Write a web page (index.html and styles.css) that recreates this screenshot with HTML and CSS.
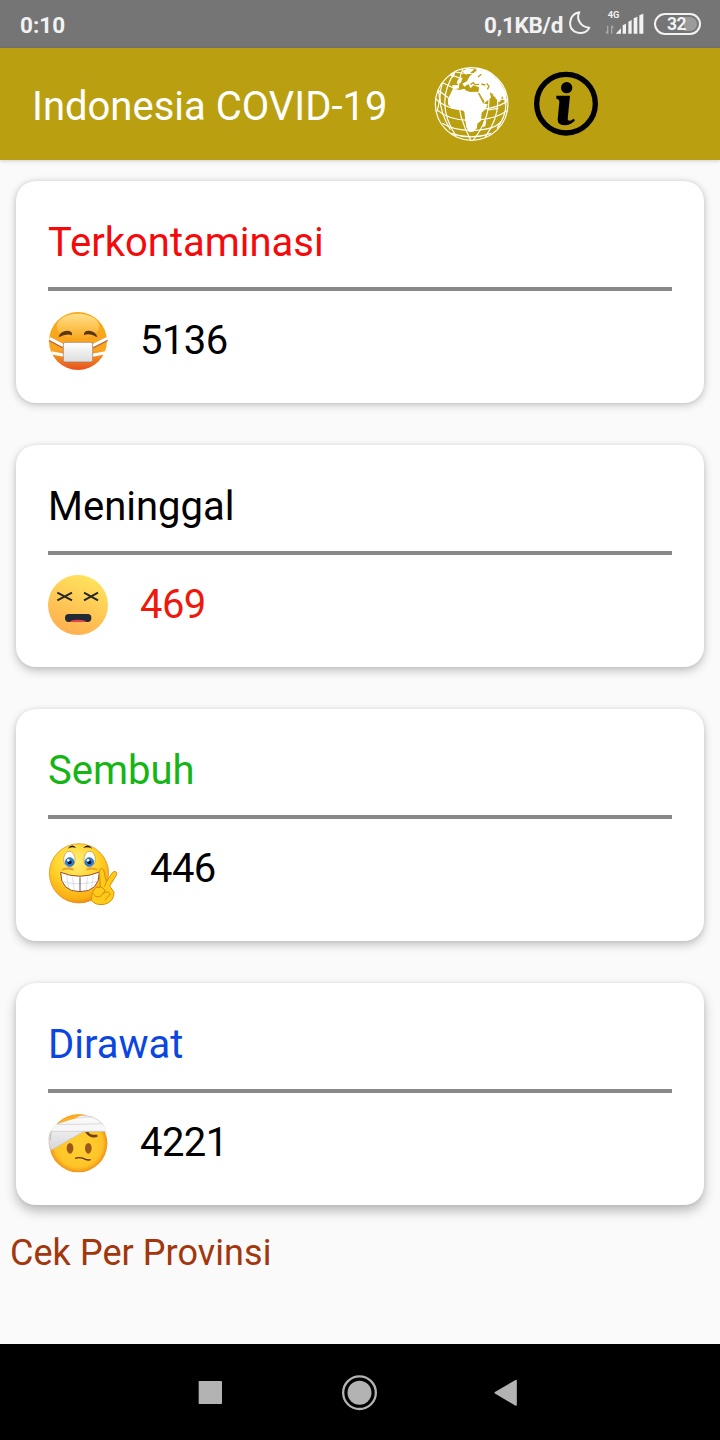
FILE: index.html
```html
<!DOCTYPE html>
<html lang="id">
<head>
<meta charset="utf-8">
<title>Indonesia COVID-19</title>
<link rel="stylesheet" href="styles.css">
</head>
<body>
<div class="screen">
  <header class="status">
    <span class="clock">0:10</span>
    <span class="speed">0,1KB/d</span>
    <svg class="moon" viewBox="0 0 72 72"><path d="M34 4C24 22 36 48 64 50C56 67 35 70 19 61C-2 47 4 9 34 4Z" fill="none" stroke="#f2f2f2" stroke-width="6" stroke-linejoin="round"/></svg>
    <svg class="signal" viewBox="405 30 120 75">
      <text x="413" y="55" class="net">4G</text>
      <path d="M413 77V101M413 101L408 95M425 101V77M425 77L430 83" stroke="#aaa" stroke-width="4" fill="none"/>
      <path d="M437 101L453 85V101ZM458 101V76L468 71V101ZM475 101V65L485 60V101ZM491 101V55L502 50V101ZM508 101V46L520 41V101Z" fill="#f2f2f2"/>
    </svg>
    <span class="battery">32</span>
  </header>
  <div class="toolbar">
    <h1>Indonesia COVID-19</h1>
    <svg class="globe" viewBox="0 -3 300 282">
      <g fill="none" stroke="#fff" stroke-width="3.500">
        <circle cx="140" cy="138" r="109"/>
        <path d="M38 97Q50 118 35 162M52 75Q30 140 76 215M91 40Q26 135 94 235M113 34Q75 130 137 246M173 35Q222 150 145 246M192 45Q250 140 180 238M215 61Q270 140 216 211"/>
        <path d="M31 121Q66 158 140 156T248 128M35 155Q75 190 144 187T246 158M52 196Q90 220 150 217T229 190M78 226Q138 247 199 226M39 96L70 119M53 74L87 91M76 50L112 63M91 42Q140 52 194 43M212 121L249 126M189 156L220 151"/>
      </g>
      <g fill="#fff">
        <path d="M83 94L100 94L116 91L124 98L136 101L157 101L163 114L174 136L188 139L182 153L170 164L168 188L157 197L156 210L145 221L132 222L124 208L121 188L118 161L109 154L80 153L69 139V122Z"/>
        <path d="M176 190L184 187L181 204L174 208Z"/>
        <path d="M158 103L178 135L198 119L195 107L205 114L213 119L218 130L225 132L231 114L238 127L240 144L245 123L241 100L226 75L201 48L177 36L153 39L134 55L126 70L112 77L118 86L130 78L137 91L145 82L162 88L161 99Z"/>
        <path d="M82 81L103 82L99 91L84 95ZM98 65L112 58L108 74L95 78ZM112 39L128 31L148 34L135 45L123 50ZM151 30L177 34L157 42ZM76 52L91 43L84 59Z"/>
      </g>
      <path d="M137 79L145 74L150 80L162 79M169 78L181 81M185 76L192 85L187 94M125 91L133 99L157 98L154 91M161 105L177 132M195 105L205 112M115 65L126 57M159 57L169 49M98 95L119 90" fill="none" stroke="#baa010" stroke-width="4"/>
    </svg>
    <svg class="info" viewBox="0 0 252 252">
      <circle cx="123" cy="125" r="88" fill="none" stroke="#000" stroke-width="16"/>
      <circle cx="125" cy="77" r="17"/>
      <path d="M94 101H135L128 172Q129 177 136 176L146 170L150 175Q139 188 122 190Q96 190 98 172L103 121Q104 112 94 110Z"/>
    </svg>
  </div>
  <main class="content">
    <section class="card high">
      <h2 class="red">Terkontaminasi</h2>
      <div class="row">
        <svg class="face" viewBox="24 33 180 180">
          <defs><linearGradient id="mask-skin" x2="0" y2="1"><stop stop-color="#f8a817"/><stop offset=".65" stop-color="#f9a51f"/><stop offset="1" stop-color="#e8501e"/></linearGradient>
          <linearGradient id="shine" x2="0" y2="1"><stop stop-color="#ffe08c"/><stop offset="1" stop-color="#faa91f"/></linearGradient>
          <linearGradient id="cloth" x2="0" y2="1"><stop stop-color="#fff"/><stop offset="1" stop-color="#dcdcdc"/></linearGradient></defs>
          <circle cx="114" cy="123" r="87" fill="url(#mask-skin)"/>
          <ellipse cx="114" cy="79" rx="64" ry="38" fill="url(#shine)"/>
          <path d="M29 117L70 139M201 117L158 139" stroke="#b9643a" stroke-width="13"/>
          <path d="M29 115L70 137M201 115L158 137M34 158L72 166M196 158L157 166" stroke="#fff" stroke-width="9"/>
          <path d="M56 112Q60 92 83 92Q99 94 96 106Q80 99 56 112ZM132 106Q130 91 148 92Q168 94 172 112Q148 98 132 106Z" fill="#5b3511"/>
          <rect x="70" y="127" width="88" height="59" rx="5" fill="url(#cloth)" stroke="#9c7663" stroke-width="2"/>
        </svg>
        <span>5136</span>
      </div>
    </section>
    <section class="card">
      <h2>Meninggal</h2>
      <div class="row red-value">
        <svg class="face" viewBox="24 30 180 180">
          <defs><linearGradient id="gone" x1=".7" x2=".3" y2="1"><stop stop-color="#ffe45b"/><stop offset="1" stop-color="#ffae50"/></linearGradient></defs>
          <circle cx="114" cy="120" r="90" fill="url(#gone)"/>
          <path d="M52 83L96 106M52 106L96 83M132 83L174 106M132 106L174 83" stroke="#282823" stroke-width="6"/>
          <rect x="75" y="147" width="79" height="24" rx="11" fill="#202b33"/>
          <path d="M89 171Q93 164 114 164T139 171Z" fill="#f13c52"/>
        </svg>
        <span>469</span>
      </div>
    </section>
    <section class="card">
      <h2 class="green">Sembuh</h2>
      <div class="row">
        <svg class="face wide" viewBox="24 21 210 210">
          <defs><radialGradient id="grin" cx=".45" cy=".3" r=".75"><stop stop-color="#ffee79"/><stop offset=".5" stop-color="#ffd32a"/><stop offset=".85" stop-color="#fbac11"/><stop offset="1" stop-color="#dc790b"/></radialGradient></defs>
          <circle cx="117" cy="124" r="89" fill="url(#grin)" stroke="#db860c" stroke-width="2"/>
          <path d="M83 50Q96 32 109 48Q96 43 83 50ZM129 48Q143 32 157 50Q143 43 129 48Z" fill="#1b1208"/>
          <g fill="#fff" stroke="#b58e45" stroke-width="2"><ellipse cx="88" cy="82" rx="17" ry="24"/><ellipse cx="149" cy="82" rx="17" ry="24"/></g>
          <g fill="#2680d7" stroke="#144f9c" stroke-width="2"><circle cx="89" cy="90" r="13"/><circle cx="148" cy="90" r="13"/></g>
          <circle cx="89" cy="91" r="6" fill="#071432"/><circle cx="148" cy="91" r="6" fill="#071432"/>
          <circle cx="85" cy="85" r="4" fill="#fff"/><circle cx="144" cy="85" r="4" fill="#fff"/>
          <path d="M66 113Q82 107 101 113M139 113Q156 107 172 113" fill="none" stroke="#ee9b27" stroke-width="5"/>
          <path d="M62 121Q120 145 178 120Q178 179 120 179T62 121Z" fill="#fff" stroke="#915026" stroke-width="3"/>
          <path d="M67 149Q119 162 172 148M80 130L86 168M98 134L102 176M142 134L139 176M160 129L155 168" fill="none" stroke="#cccdd8" stroke-width="2"/>
          <path d="M120 136V178" stroke="#60545d" stroke-width="3"/>
          <path d="M181 165L178 117Q183 103 191 114L199 150L217 122Q230 112 230 128L209 162L222 180Q223 209 193 217Q165 221 154 204L157 181L168 166Z" fill="#ffcb19" stroke="#d98c0d" stroke-width="3"/>
          <path d="M168 167Q189 160 195 177L180 195M190 184Q201 175 211 186L194 205M158 184Q166 197 179 195M199 151L193 164" fill="none" stroke="#d98c0d" stroke-width="3"/>
        </svg>
        <span>446</span>
      </div>
    </section>
    <section class="card low">
      <h2 class="blue">Dirawat</h2>
      <div class="row">
        <svg class="face" viewBox="24 31 180 180">
          <defs><radialGradient id="hurt"><stop stop-color="#ffd033"/><stop offset=".82" stop-color="#ffc427"/><stop offset="1" stop-color="#f29217"/></radialGradient>
          <linearGradient id="wrap" x2="0" y2="1"><stop stop-color="#fff"/><stop offset="1" stop-color="#d6d6da"/></linearGradient></defs>
          <circle cx="115" cy="122" r="87" fill="url(#hurt)"/>
          <path d="M135 87L145 87Q151 99 172 96V103Q148 109 135 87Z" fill="#713d14"/>
          <path d="M49 65L119 39Q162 36 189 65L196 86L130 87L33 143Q22 118 30 90Z" fill="url(#wrap)" stroke="#c8bfba" stroke-width="2"/>
          <path d="M55 61Q84 34 130 35L104 48Z" fill="#ffae21"/>
          <path d="M34 89Q29 107 31 112" fill="none" stroke="#bcb8b8" stroke-width="3"/>
          <path d="M49 65Q120 64 188 62L197 85H34Q37 73 49 65Z" fill="#f7f7f8"/>
          <path d="M51 65Q114 66 188 63M34 86H195M107 47L158 42" fill="none" stroke="#ccc9c9" stroke-width="2"/>
          <ellipse cx="90" cy="137" rx="10" ry="16" fill="#9b581b"/><ellipse cx="145" cy="137" rx="10" ry="16" fill="#9b581b"/>
          <path d="M105 167Q117 163 130 167Q141 174 152 171" fill="none" stroke="#59310d" stroke-width="4"/>
        </svg>
        <span>4221</span>
      </div>
    </section>
    <a class="link">Cek Per Provinsi</a>
  </main>
  <nav class="nav">
    <svg viewBox="0 0 1080 240"><rect x="56" y="93" width="70" height="69" rx="2" fill="#b3b3b3"/><circle cx="538.500" cy="128" r="49" fill="none" stroke="#b3b3b3" stroke-width="7"/><circle cx="538.500" cy="128" r="36" fill="#b3b3b3"/><path d="M946 128L1008 92V165Z" fill="#b3b3b3" stroke="#b3b3b3" stroke-width="5" stroke-linejoin="round"/></svg>
  </nav>
</div>
</body>
</html>
```
FILE: styles.css
```css
* { box-sizing: border-box; }
body { margin: 0; font-family: Roboto, sans-serif; background: #fafafa; }
svg { display: block; flex: none; }
h1, h2 { margin: 0; font-weight: 400; }
.screen { width: 720px; height: 1440px; display: flex; flex-direction: column; overflow: hidden; }
.status { height: 48px; flex: none; display: flex; align-items: center; padding: 2px 19px 0 20px; background: #757575; color: #f2f2f2; font-size: 22.5px; font-weight: 700; }
.clock { margin-right: auto; }
.speed { margin-right: 5px; letter-spacing: -.3px; }
.moon { width: 24px; height: 24px; margin-top: -4px; }
.signal { width: 40px; height: 25px; margin: -5px 9px 0 13px; }
.net { font-size: 28px; font-weight: 700; fill: #f2f2f2; }
.battery { width: 47px; height: 22px; margin-top: -3px; border: 2px solid #f2f2f2; border-radius: 11px; padding-right: 2px; line-height: 18px; font-size: 17.5px; letter-spacing: -.5px; text-align: center; background: linear-gradient(to right, transparent 65%, #9b9b9b 65%) padding-box; box-shadow: inset 0 0 0 2px #757575; }
.toolbar { height: 112px; flex: none; display: flex; align-items: center; padding-left: 32px; background: #baa010; box-shadow: 0 1px 4px rgba(0,0,0,.18); position: relative; }
.toolbar h1 { width: 393px; color: #fff; font-size: 40px; line-height: 47px; padding-top: 5px; white-space: nowrap; }
.globe { width: 100px; height: 94px; }
.info { width: 84px; height: 84px; }
.content { flex: 1; padding: 21px 16px 0; display: flex; flex-direction: column; }
.card { flex: none; margin-bottom: 42px; padding: 32px; border-radius: 20px; background: #fff; box-shadow: 0 4px 10px rgba(0,0,0,.22), 0 0 4px rgba(0,0,0,.08); }
.high { box-shadow: 0 2px 8px rgba(0,0,0,.22), 0 0 4px rgba(0,0,0,.08); }
.low { box-shadow: 0 6px 12px rgba(0,0,0,.26), 0 0 4px rgba(0,0,0,.08); }
.card h2 { height: 78px; border-bottom: 4px solid #888; font-size: 40px; line-height: 60px; }
.row { display: flex; align-items: flex-start; gap: 32px; margin-top: 20px; font-size: 40px; line-height: 60px; letter-spacing: -.6px; }
.face { width: 60px; height: 60px; }
.wide { width: 70px; height: 70px; }
.red { color: #f40a0a; }
.red-value { color: #f0180c; }
.green { color: #15b515; }
.blue { color: #0b46e0; }
.link { margin: -21px 0 0 -6px; font-size: 36px; line-height: 54px; letter-spacing: .05px; color: #a2360c; }
.nav { height: 96px; flex: none; background: #000; display: flex; justify-content: center; padding-top: 6px; }
.nav svg { width: 360px; height: 80px; }
```
